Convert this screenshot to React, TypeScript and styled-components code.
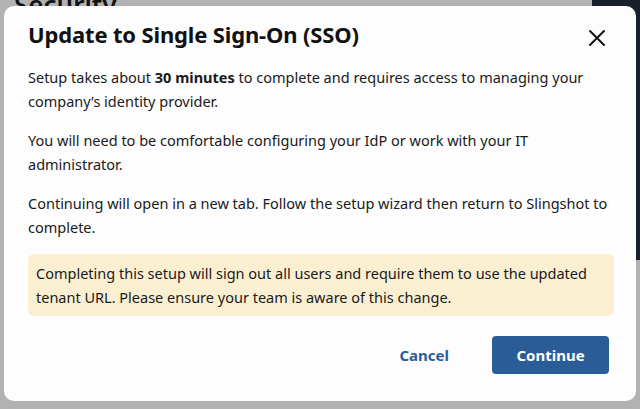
import React from 'react';
import styled, { createGlobalStyle } from 'styled-components';

const GlobalStyle = createGlobalStyle`
  html, body {
    margin: 0;
    padding: 0;
    width: 640px;
    height: 409px;
    overflow: hidden;
    background: #ffffff;
    font-family: "Noto Sans", "Open Sans", Arial, sans-serif;
  }
`;

const Page = styled.div`
  position: relative;
  width: 640px;
  height: 409px;
  display: grid;
  grid-template-columns: 1fr 48px;
  background: #ffffff;
`;

const PageMain = styled.div`
  padding: 0 0 0 14px;
`;

const PageHeading = styled.h1`
  margin: -14px 0 0;
  font-size: 26px;
  font-weight: 600;
  color: #16191f;
`;

const SidePanel = styled.div`
  background: #232f3e;
  height: 260px;
`;

const Backdrop = styled.div`
  position: fixed;
  inset: 0;
  background: rgba(0, 0, 0, 0.3);
  display: flex;
  align-items: flex-start;
  padding: 6px 4px 0;
  box-sizing: border-box;
`;

const Dialog = styled.div`
  width: 632px;
  height: 395px;
  box-sizing: border-box;
  background: #fdfdfd;
  border-radius: 10px;
  padding: 13px 20px 0 24px;
  display: flex;
  flex-direction: column;
`;

const Header = styled.div`
  display: flex;
  align-items: center;
  justify-content: space-between;
  height: 30px;
  padding-right: 7px;
`;

const Title = styled.h2`
  margin: 0;
  font-size: 22px;
  font-weight: 700;
  color: #111111;
  letter-spacing: -0.15px;
`;

const CloseButton = styled.button`
  border: 0;
  background: transparent;
  padding: 0;
  width: 20px;
  height: 20px;
  display: flex;
  align-items: center;
  justify-content: center;
  cursor: pointer;
  margin-right: 2px;
  margin-top: 8px;
`;

const Body = styled.div`
  margin-top: 16px;
`;

const Paragraph = styled.p`
  margin: 0 0 15px;
  font-size: 14.5px;
  line-height: 24px;
  color: #1a1a1a;
  strong {
    font-weight: 700;
  }
`;

const Notice = styled.div`
  background: #fbefd2;
  border-radius: 6px;
  padding: 7px 8px;
  font-size: 14.5px;
  line-height: 24px;
  color: #1a1a1a;
  width: 586px;
  box-sizing: border-box;
`;

const Footer = styled.div`
  display: flex;
  justify-content: flex-end;
  align-items: center;
  gap: 43px;
  margin-top: 20px;
  padding-right: 7px;
`;

const LinkButton = styled.button`
  border: 0;
  background: transparent;
  padding: 0;
  font-family: inherit;
  font-size: 15px;
  font-weight: 700;
  color: #2a5d98;
  cursor: pointer;
`;

const PrimaryButton = styled.button`
  border: 0;
  border-radius: 4px;
  background: #2a5d98;
  color: #ffffff;
  font-family: inherit;
  font-size: 15px;
  font-weight: 700;
  width: 117px;
  height: 38px;
  cursor: pointer;
`;

export default function App() {
  return (
    <>
      <GlobalStyle />
      <Page>
        <PageMain>
          <PageHeading>Security</PageHeading>
        </PageMain>
        <SidePanel />
      </Page>
      <Backdrop>
        <Dialog role="dialog" aria-modal="true">
          <Header>
            <Title>Update to Single Sign-On (SSO)</Title>
            <CloseButton aria-label="Close">
              <svg width="18" height="18" viewBox="0 0 18 18">
                <path d="M2 2 L16 16 M16 2 L2 16" stroke="#111" strokeWidth="2" strokeLinecap="round" />
              </svg>
            </CloseButton>
          </Header>
          <Body>
            <Paragraph>
              Setup takes about <strong>30 minutes</strong> to complete and requires access to managing your
              company’s identity provider.
            </Paragraph>
            <Paragraph>
              You will need to be comfortable configuring your IdP or work with your IT administrator.
            </Paragraph>
            <Paragraph>
              Continuing will open in a new tab. Follow the setup wizard then return to Slingshot to complete.
            </Paragraph>
            <Notice>
              Completing this setup will sign out all users and require them to use the updated tenant URL. Please
              ensure your team is aware of this change.
            </Notice>
          </Body>
          <Footer>
            <LinkButton>Cancel</LinkButton>
            <PrimaryButton>Continue</PrimaryButton>
          </Footer>
        </Dialog>
      </Backdrop>
    </>
  );
}
